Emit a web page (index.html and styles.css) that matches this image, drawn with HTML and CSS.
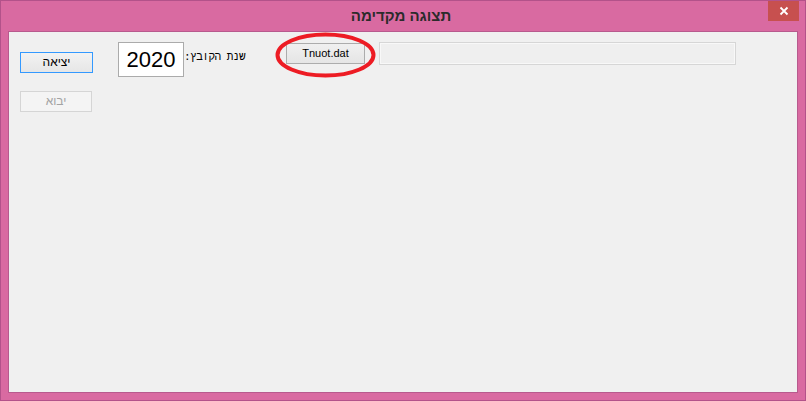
FILE: index.html
```html
<!DOCTYPE html>
<html lang="he">
<head>
    <meta charset="UTF-8">
    <title>תצוגה מקדימה</title>
    <link rel="stylesheet" href="styles.css">
</head>
<body>
    <div class="window">
        <!-- Title bar -->
        <div class="titlebar">
            <div class="title" dir="rtl">תצוגה מקדימה</div>
            <div class="close-btn">
                <svg width="10" height="10" viewBox="0 0 10 10">
                    <path d="M1.5 1.5 L8.5 8.5 M8.5 1.5 L1.5 8.5" stroke="#fff" stroke-width="1.8" />
                </svg>
            </div>
        </div>

        <!-- Client area -->
        <div class="client">
            <div class="row">
                <div class="buttons">
                    <div class="btn btn-focus" dir="rtl">יציאה</div>
                    <div class="btn btn-disabled" dir="rtl">יבוא</div>
                </div>
                <div class="year-box">2020</div>
                <div class="year-label" dir="rtl">שנת הקובץ:</div>
                <div class="file-wrap">
                    <div class="btn btn-file">Tnuot.dat</div>
                    <!-- hand drawn circle over the button -->
                    <svg class="mark" width="105" height="48" viewBox="0 0 105 48">
                        <ellipse cx="52.5" cy="24" rx="48" ry="20.5" fill="none" stroke="#ed1c24" stroke-width="4" />
                    </svg>
                </div>
                <div class="progress"></div>
            </div>
        </div>
    </div>
</body>
</html>
```

FILE: styles.css
```css
* {
    margin: 0;
    padding: 0;
    box-sizing: border-box;
}

body {
    width: 806px;
    height: 401px;
    overflow: hidden;
    font-family: "Liberation Sans", "DejaVu Sans", sans-serif;
}

/* Window frame */
.window {
    width: 806px;
    height: 401px;
    background-color: #d96aa1;
    border: 1px solid #b3528a;
    display: flex;
    flex-direction: column;
    padding: 0 7px 7px 7px;
}

.titlebar {
    height: 30px;
    display: flex;
    align-items: flex-start;
    position: relative;
}

.titlebar .title {
    flex: 1;
    text-align: center;
    font-size: 15px;
    font-weight: bold;
    color: #2b2b2b;
    padding-top: 6px;
    padding-left: 26px;
}

.close-btn {
    width: 31px;
    height: 20px;
    background-color: #c7504f;
    display: flex;
    align-items: center;
    justify-content: center;
    margin-right: -1px;
}

/* Client area */
.client {
    flex: 1;
    background-color: #f0f0f0;
    border: 1px solid #b85a8e;
}

.row {
    display: flex;
    align-items: flex-start;
}

.buttons {
    display: flex;
    flex-direction: column;
    gap: 18px;
    margin-left: 11px;
    margin-top: 20px;
}

.btn {
    width: 73px;
    height: 21px;
    font-size: 12px;
    text-align: center;
    line-height: 19px;
    border: 1px solid #acacac;
    background: linear-gradient(#f0f0f0, #e5e5e5);
    color: #000;
}

.btn-focus {
    border-color: #3399ff;
    background: linear-gradient(#f2f2f2, #e6e6e6);
}

.btn-disabled {
    width: 72px;
    border-color: #d5d5d5;
    background: #f4f4f4;
    color: #a3a3a3;
}

.year-box {
    margin-left: 25px;
    margin-top: 10px;
    width: 66px;
    height: 35px;
    background-color: #fff;
    border: 1px solid #ababab;
    font-size: 22px;
    line-height: 33px;
    text-align: center;
    color: #000;
}

.year-label {
    width: 59px;
    margin-left: 2px;
    margin-top: 19px;
    font-family: "Liberation Mono", "DejaVu Sans Mono", monospace;
    font-size: 11px;
    letter-spacing: -0.5px;
    color: #000;
    white-space: nowrap;
}

.file-wrap {
    position: relative;
    margin-left: 41px;
    margin-top: 11px;
}

.btn-file {
    width: 79px;
    font-size: 11px;
}

.mark {
    position: absolute;
    left: -13px;
    top: -12px;
}

.progress {
    margin-left: 14px;
    margin-top: 10px;
    width: 357px;
    height: 23px;
    border: 1px solid #d6d6d6;
    box-shadow: inset 0 0 0 1px #f8f8f8;
    background-color: #efefef;
}
```
